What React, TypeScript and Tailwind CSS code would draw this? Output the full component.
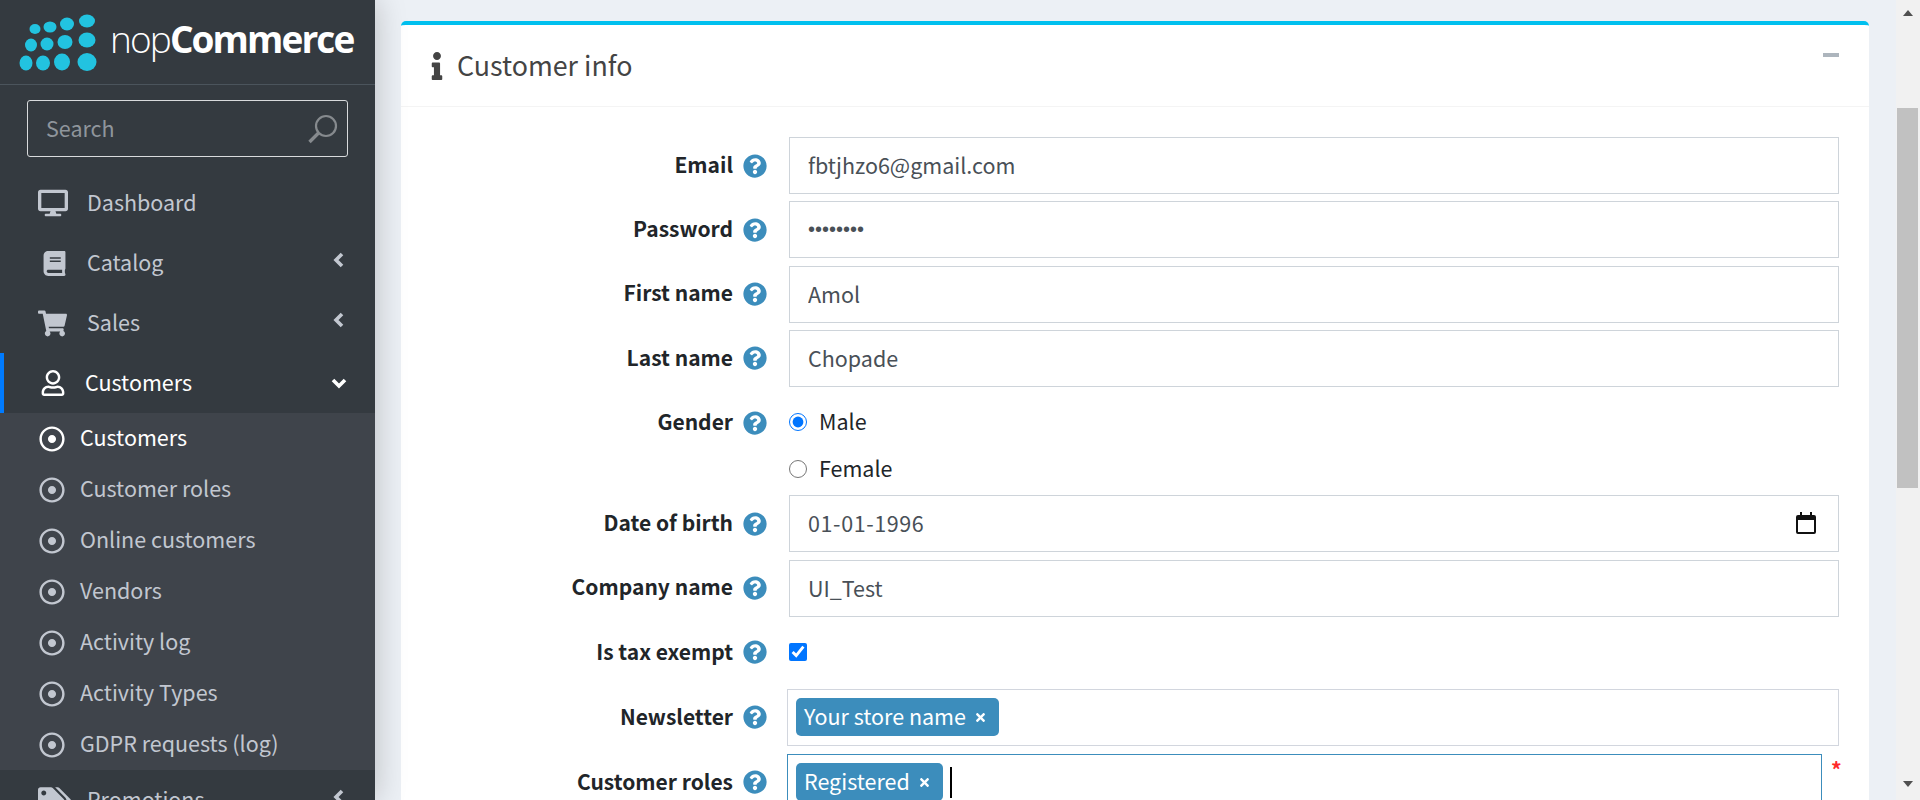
import {
  FaBook,
  FaDesktop,
  FaInfo,
  FaQuestionCircle,
  FaRegDotCircle,
  FaRegUser,
  FaShoppingCart,
  FaTags,
  FaTimes,
} from "react-icons/fa";
import type { ReactNode } from "react";

const Logo = () => (
  <div className="h-[85px] shrink-0 border-b border-[#4b545c] flex items-start">
    <svg width="100" height="84" viewBox="0 0 100 84" className="shrink-0 ml-[12px]">
      <g fill="#22c3e0" transform="translate(-12 0)">
        <ellipse cx="35" cy="29" rx="5.5" ry="5" />
        <ellipse cx="50" cy="27" rx="6.5" ry="5.5" />
        <ellipse cx="67" cy="24" rx="7" ry="6.5" />
        <ellipse cx="87" cy="21" rx="8" ry="6.5" />
        <ellipse cx="31" cy="45" rx="6" ry="6.5" />
        <ellipse cx="47" cy="44" rx="6.5" ry="6.5" />
        <ellipse cx="65" cy="42" rx="7.5" ry="7" />
        <ellipse cx="87" cy="40" rx="8.5" ry="7.5" />
        <ellipse cx="26" cy="63" rx="6.5" ry="7.5" />
        <ellipse cx="43" cy="63" rx="7" ry="7.5" />
        <ellipse cx="62" cy="62" rx="8" ry="8.5" />
        <ellipse cx="87" cy="62" rx="9.5" ry="9" />
      </g>
    </svg>
    <span className="ml-[-2px] mt-[17px] text-[37px] leading-[44px] tracking-[-1.9px] text-white font-['Open_Sans',sans-serif]">
      <span className="font-light">nop</span>
      <span className="font-bold">Commerce</span>
    </span>
  </div>
);

const SearchBox = () => (
  <div className="mx-[27px] mt-[15px] h-[57px] border border-[#d8dadc] rounded-[3px] flex items-center justify-between pl-[18px] pr-[8px]">
    <span className="text-[21.5px] text-[#8f959c] mt-[-1px]">Search</span>
    <svg width="32" height="32" viewBox="0 0 32 32" fill="none" stroke="#868a8e" strokeWidth="2.2">
      <circle cx="19" cy="13" r="10" />
      <path d="M11.5 20 L2.5 29" strokeWidth="3.4" />
    </svg>
  </div>
);

const ArrowLeft = () => (
  <svg width="11" height="16" viewBox="0 0 11 16" fill="none" stroke="currentColor" strokeWidth="3.6" className="mt-[-6px]">
    <path d="M9 2 L3 8 L9 14" />
  </svg>
);

const NavRow = ({
  icon,
  label,
  arrow = true,
}: {
  icon: ReactNode;
  label: string;
  arrow?: boolean;
}) => (
  <div className="h-[60px] flex items-center pl-[38px] pr-[31px] text-[#c2c7d0] text-[21.5px]">
    <span className="w-[49px] flex items-center text-[#c2c7d0]">{icon}</span>
    <span className="flex-1 mt-[-2px]">{label}</span>
    {arrow && <ArrowLeft />}
  </div>
);

const subItems = [
  "Customer roles",
  "Online customers",
  "Vendors",
  "Activity log",
  "Activity Types",
  "GDPR requests (log)",
];

const Sidebar = () => (
  <aside className="relative z-10 w-[375px] shrink-0 h-[800px] overflow-hidden bg-[#343a40] shadow-[0_0_30px_rgba(0,0,0,0.22)]">
    <Logo />
    <SearchBox />
    <nav className="mt-[16px]">
      <NavRow icon={<FaDesktop className="text-[30px]" />} label="Dashboard" arrow={false} />
      <NavRow icon={<FaBook className="text-[25px] ml-[4px]" />} label="Catalog" />
      <NavRow icon={<FaShoppingCart className="text-[29px]" />} label="Sales" />
      <div className="h-[60px] flex items-center border-l-4 border-[#007bff] pl-[36px] pr-[28px] text-white text-[21.5px]">
        <span className="w-[45px] flex items-center">
          <FaRegUser className="text-[26px]" />
        </span>
        <span className="flex-1 mt-[-2px]">Customers</span>
        <svg width="16" height="11" viewBox="0 0 16 11" fill="none" stroke="currentColor" strokeWidth="3.6">
          <path d="M2 2 L8 8 L14 2" />
        </svg>
      </div>
      <div className="bg-[#3f444b] h-[357px]">
        <div className="h-[51px] flex items-center pl-[39px] text-white text-[21.5px]">
          <FaRegDotCircle className="text-[26px] mr-[15px]" />
          <span className="mt-[-2px]">Customers</span>
        </div>
        {subItems.map((s) => (
          <div key={s} className="h-[51px] flex items-center pl-[39px] text-[#c2c7d0] text-[21.5px]">
            <FaRegDotCircle className="text-[26px] mr-[15px]" />
            <span className="mt-[-2px]">{s}</span>
          </div>
        ))}
      </div>
      <NavRow icon={<FaTags className="text-[33px]" />} label="Promotions" />
    </nav>
  </aside>
);

const Label = ({ text }: { text: string }) => (
  <div className="w-[388px] shrink-0 h-[57px] flex items-center justify-end pr-[22px]">
    <span className="text-[21px] font-semibold text-[#212529] mt-[-2px]">{text}</span>
    <FaQuestionCircle className="ml-[10px] text-[24px] text-[#3c8dbc]" />
  </div>
);

const inputCls =
  "w-full h-[57px] border border-[#ced4da] bg-white pl-[18px] pb-[2px] text-[21.5px] text-[#495057] outline-none";

const Tag = ({ text }: { text: string }) => (
  <span className="h-[38px] rounded-[5px] bg-[#3c8dbc] text-white text-[21.5px] leading-[36px] pl-[8px] pr-[12px] flex items-center gap-[8px] shrink-0">
    <span className="mt-[-2px]">{text}</span>
    <FaTimes className="text-[13px]" />
  </span>
);

const TextRow = ({ label, value }: { label: string; value: string }) => (
  <div className="flex mb-[7.33px]">
    <Label text={label} />
    <input className={inputCls} type="text" defaultValue={value} />
  </div>
);

const CustomerInfo = () => (
  <section className="bg-white border-t-4 border-[#00c0ef] rounded-[5px] h-[900px]">
    <header className="h-[82px] border-b border-[#f4f4f4] flex items-center justify-between pl-[22px] pr-[30px]">
      <div className="flex items-center text-[#444]">
        <FaInfo className="text-[28px] mr-[6px]" />
        <span className="text-[26.8px] leading-[36px] mt-[-2px]">Customer info</span>
      </div>
      <span className="w-[16px] h-[4px] bg-[#adb5bd] mb-[22px]" />
    </header>
    <div className="pt-[30px] pr-[30px]">
      <TextRow label="Email" value="fbtjhzo6@gmail.com" />
      <div className="flex mb-[7.33px]">
        <Label text="Password" />
        <input
          className="w-full h-[57px] border border-[#ced4da] bg-white pl-[18px] text-[20px] text-[#495057] outline-none font-['Liberation_Sans',sans-serif]"
          type="password"
          defaultValue="password"
        />
      </div>
      <TextRow label="First name" value="Amol" />
      <TextRow label="Last name" value="Chopade" />

      {/* Gender */}
      <div className="flex h-[93.67px] mb-[7.33px]">
        <Label text="Gender" />
        <div className="text-[21.5px] text-[#212529]">
          <label className="h-[57px] flex items-center mt-[-1px]">
            <input type="radio" name="gender" defaultChecked className="w-[18px] h-[18px] m-0 mr-[12px]" />
            <span className="mt-[-2px]">Male</span>
          </label>
          <label className="h-[37px] flex items-center">
            <input type="radio" name="gender" className="w-[18px] h-[18px] m-0 mr-[12px]" />
            <span className="mt-[-2px]">Female</span>
          </label>
        </div>
      </div>

      {/* Date of birth */}
      <div className="flex mb-[7.33px]">
        <Label text="Date of birth" />
        <div className="relative w-full">
          <input className={`${inputCls} tracking-[0.6px]`} type="text" defaultValue="01-01-1996" />
          <svg width="20" height="22" viewBox="0 0 20 22" className="absolute right-[23px] top-[17px]">
            <path d="M4 0h2v3h8V0h2v3h2a2 2 0 0 1 2 2v15a2 2 0 0 1-2 2H2a2 2 0 0 1-2-2V5a2 2 0 0 1 2-2h2z M2 8v12h16V8z" fill="#111" fillRule="evenodd" />
          </svg>
        </div>
      </div>

      <TextRow label="Company name" value="UI_Test" />

      {/* Is tax exempt */}
      <div className="flex h-[65px]">
        <Label text="Is tax exempt" />
        <div className="h-[57px] flex items-center">
          <input type="checkbox" defaultChecked className="w-[18px] h-[18px] m-0" />
        </div>
      </div>

      {/* Newsletter */}
      <div className="flex h-[65px]">
        <Label text="Newsletter" />
        <div className="ml-[-2px] w-[1052px] h-[57px] border border-[#d2d6de] flex items-center pl-[8px]">
          <Tag text="Your store name" />
        </div>
      </div>

      {/* Customer roles */}
      <div className="flex h-[65px]">
        <Label text="Customer roles" />
        <div className="ml-[-2px] w-[1035px] shrink-0 h-[57px] border border-[#3c8dbc] flex items-center pl-[8px]">
          <Tag text="Registered" />
          <span className="ml-[7px] w-[2px] h-[31px] bg-black" />
        </div>
        <span className="ml-[9px] text-[21px] leading-[30px] font-bold text-[#ff2a2a]">*</span>
      </div>
    </div>
  </section>
);

const Scrollbar = () => (
  <div className="w-[24px] shrink-0 h-[800px] bg-[#f1f1f1] flex flex-col items-center relative">
    <div className="mt-[10px] w-0 h-0 border-x-[5.5px] border-x-transparent border-b-[6px] border-b-[#505050]" />
    <div className="mt-[92px] ml-[-1px] w-[21px] h-[380px] bg-[#c1c1c1]" />
    <div className="mt-[293px] w-0 h-0 border-x-[5.5px] border-x-transparent border-t-[6px] border-t-[#505050]" />
  </div>
);

export default function App() {
  return (
    <div className="flex h-[800px] w-[1920px] overflow-hidden bg-[#ecf0f5] font-['Noto_Sans_CJK_SC','Noto_Sans',sans-serif]">
      <Sidebar />
      <main className="flex-1 h-[800px] overflow-hidden pt-[21px] pl-[26px] pr-[27px]">
        <CustomerInfo />
      </main>
      <Scrollbar />
    </div>
  );
}
